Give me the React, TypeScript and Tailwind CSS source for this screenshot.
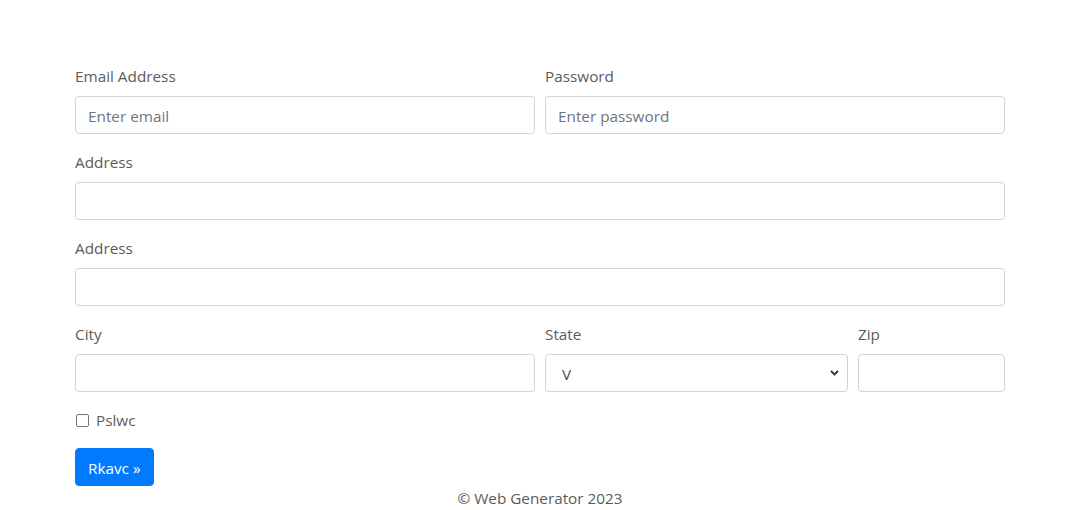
import React from "react";

const font = { fontFamily: '"Segoe UI", "Open Sans", "Noto Sans", sans-serif' };

function Label({ children }: { children: React.ReactNode }) {
  return <label className="block mb-2 text-[15.3px] leading-[23px] pt-px text-[#5b5b5b]">{children}</label>;
}

function Input({ placeholder }: { placeholder?: string }) {
  return (
    <input
      placeholder={placeholder}
      className="block w-full h-[38px] px-3 pt-[7px] pb-[5px] text-[15.3px] leading-6 text-[#495057] bg-white border border-[#ced4da] rounded-[4px] placeholder:text-[#6c757d] outline-none"
      style={font}
    />
  );
}

export default function App() {
  return (
    <div className="w-[1080px] h-[510px] bg-white overflow-hidden" style={font}>
      <div className="w-[930px] mx-auto pt-16">
        <form>
          <div className="flex gap-[10px] mb-4">
            <div className="w-[460px]">
              <Label>Email Address</Label>
              <Input placeholder="Enter email" />
            </div>
            <div className="w-[460px]">
              <Label>Password</Label>
              <Input placeholder="Enter password" />
            </div>
          </div>
          <div className="mb-4">
            <Label>Address</Label>
            <Input />
          </div>
          <div className="mb-4">
            <Label>Address</Label>
            <Input />
          </div>
          <div className="flex gap-[10px] mb-4">
            <div className="w-[460px]">
              <Label>City</Label>
              <Input />
            </div>
            <div className="w-[303px]">
              <Label>State</Label>
              <div className="relative h-[38px] border border-[#ced4da] rounded-[4px] bg-white flex items-center pl-4 pt-[2px] text-[15.3px] text-[#495057]">
                V
                <svg className="absolute right-[8px] top-[15px]" width="9" height="6" viewBox="0 0 9 6">
                  <path d="M1 1 L4.5 4.5 L8 1" fill="none" stroke="#333" strokeWidth="1.8" />
                </svg>
              </div>
            </div>
            <div className="w-[147px]">
              <Label>Zip</Label>
              <Input />
            </div>
          </div>
          <div className="mb-4 flex items-center h-6">
            <span className="w-[13px] h-[13px] border border-[#767676] rounded-[2px] ml-px bg-white" />
            <span className="ml-[7px] pt-px leading-[23px] text-[15.3px] text-[#5b5b5b]">Pslwc</span>
          </div>
          <button
            type="button"
            className="h-[38px] px-3 pt-px bg-[#007bff] text-white text-[15.3px] leading-6 rounded-[4px] border border-[#007bff]"
            style={font}
          >
            Rkavc »
          </button>
        </form>
        <div className="text-center text-[15.3px] leading-[23px] pt-px text-[#5b5b5b]">© Web Generator 2023</div>
      </div>
    </div>
  );
}
